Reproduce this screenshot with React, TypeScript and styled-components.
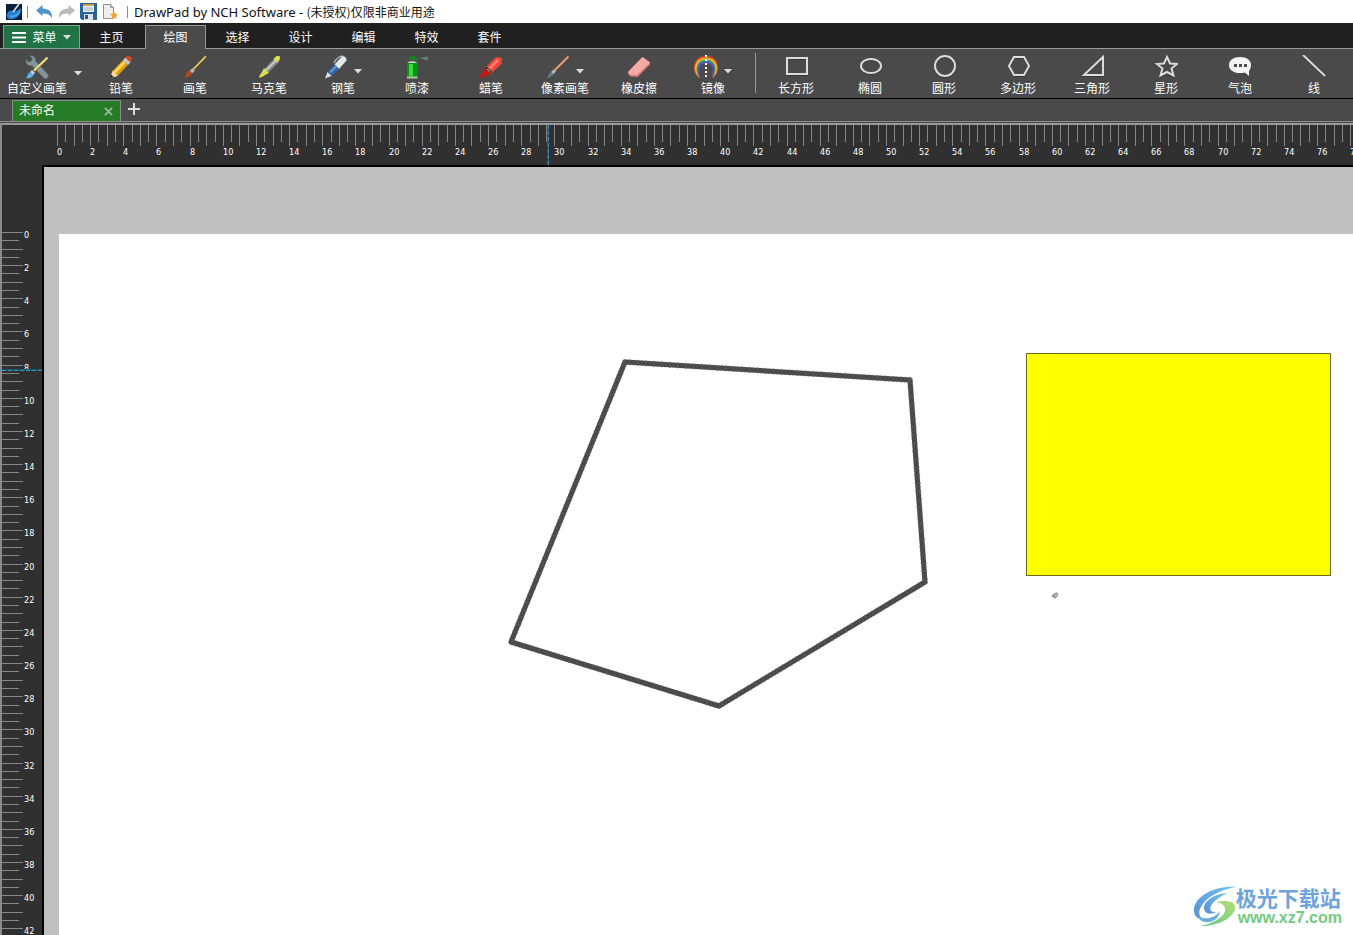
import React, { useEffect, useState } from "react";
import styled, { createGlobalStyle, css } from "styled-components";

const GlobalStyle = createGlobalStyle`
  * { box-sizing: border-box; }
  html, body { margin: 0; }
  body, button {
    font-family: "Noto Sans", "Noto Sans CJK SC", sans-serif;
    font-size: 12px;
    line-height: 16px;
  }
  button {
    margin: 0;
    padding: 0;
    border: 0;
    background: none;
    color: inherit;
  }
  svg { display: block; flex: none; }
`;

const Shell = styled.div`
  display: flex;
  flex-direction: column;
  height: 100vh;
  overflow: hidden;
  background: #4a4a4a;
  color: #fff;
`;

const TitleBar = styled.header`
  display: flex;
  align-items: center;
  flex: none;
  height: 23px;
  padding-left: 5px;
  background: #fff;
  color: #111;
`;

const QuickButton = styled.button`
  display: grid;
  place-items: center;
  width: 22px;
  height: 22px;
`;

const Rule = styled.span<{ $gap: number }>`
  width: 1px;
  height: 12px;
  margin: 0 ${(p) => p.$gap}px;
  background: #8a8a8a;
`;

const Title = styled.h1`
  display: flex;
  align-items: center;
  margin: 0;
  font-size: 13px;
  line-height: 18px;
  font-weight: 400;
  white-space: pre;
`;

const License = styled.span`
  font-family: "Noto Sans CJK SC", sans-serif;
  font-size: 12px;
`;

const MenuRow = styled.nav`
  display: flex;
  align-items: flex-end;
  flex: none;
  height: 26px;
  padding-left: 3px;
  background: #202020;
  box-shadow: inset 0 -1px #999;
`;

const MainMenu = styled.button`
  display: flex;
  align-items: center;
  justify-content: center;
  gap: 6px;
  width: 77px;
  height: 24px;
  padding-top: 1px;
  background: #217346;
  border: 1px solid #7fa790;
`;

const MenuTab = styled.button<{ $active?: boolean }>`
  width: 63px;
  height: 24px;
  padding-top: 1px;
  ${(p) =>
    p.$active &&
    css`
      width: 61px;
      margin-left: 2px;
      padding-top: 0;
      background: #4a4a4a;
      border: 1px solid #999;
      border-bottom: 0;
    `}
`;

const Ribbon = styled.div`
  display: flex;
  align-items: flex-start;
  flex: none;
  height: 50px;
  overflow: hidden;
  border-bottom: 1px solid #000;
`;

const Tool = styled.button`
  display: flex;
  flex-direction: column;
  align-items: center;
  gap: 2px;
  flex: none;
  width: 74px;
  padding-top: 6px;
  white-space: nowrap;
`;

const ToolArt = styled.span`
  display: flex;
  align-items: center;
  height: 24px;
`;

const DropMark = styled.span`
  padding: 8px 0 0 6px;
`;

const CustomTool = styled.div`
  display: flex;
  flex: none;
  width: 84px;
`;

const CustomMore = styled.button`
  width: 8px;
`;

const RibbonDivider = styled.span`
  flex: none;
  width: 1px;
  height: 40px;
  margin: 4px 3px 0 5px;
  background: #999;
`;

const DocBar = styled.div`
  display: flex;
  align-items: flex-end;
  flex: none;
  height: 23px;
  padding-left: 12px;
  border-bottom: 1px solid #8c8c8c;
`;

const DocTab = styled.div`
  display: flex;
  align-items: center;
  justify-content: space-between;
  width: 109px;
  height: 21px;
  padding: 0 6px;
  background: #267c26;
  border: 1px solid #8c8c8c;
  border-bottom: 0;
`;

const IconButton = styled.button`
  display: grid;
  place-items: center;
  width: 12px;
  height: 20px;
`;

const AddTab = styled(IconButton)`
  width: 26px;
  height: 24px;
`;

const Workspace = styled.main`
  display: grid;
  flex: 1;
  min-height: 0;
  margin-top: 1px;
  grid-template: 40px minmax(0, 1fr) / 40px minmax(0, 1fr);
  border-top: 2px solid #999;
  border-left: 2px solid #8a8a8a;
  background: #303030;
`;

const TopRuler = styled.div`
  grid-column: 1 / -1;
  overflow: hidden;
`;

const SideRuler = styled.div`
  overflow: hidden;
`;

const RulerArt = styled.svg`
  width: 100%;
  height: 100%;
  font: 9px "DejaVu Sans Condensed", "DejaVu Sans", sans-serif;
  fill: #fff;
`;

const Stage = styled.section`
  display: flex;
  overflow: hidden;
  padding: 67px 0 0 15px;
  border-top: 2px solid #000;
  border-left: 2px solid #000;
  background: #c0c0c0;
`;

const Page = styled.div`
  position: relative;
  flex: 1;
  background: #fff;
`;

const PageArt = styled.svg`
  width: 100%;
  height: 100%;
`;

const SiteMark = styled.div`
  position: absolute;
  right: 11px;
  bottom: 8px;
  display: flex;
  align-items: center;
`;

const SiteText = styled.div`
  display: flex;
  flex-direction: column;
`;

const SiteName = styled.span`
  color: #6fa3dc;
  font: 700 21px/24px "Noto Sans CJK SC", sans-serif;
`;

const SiteUrl = styled.span`
  padding-left: 2px;
  color: #72cb83;
  font: 700 16px/18px "Liberation Sans", sans-serif;
`;

const Caret = () => (
  <svg width="8" height="5" viewBox="0 0 8 5">
    <path d="M0 0h8L4 4.5z" fill="#ddd" />
  </svg>
);

const Art = ({ children }: { children: React.ReactNode }) => (
  <svg width="24" height="24" viewBox="0 0 24 24" fill="none">
    {children}
  </svg>
);

const Outline = ({ children }: { children: React.ReactNode }) => (
  <Art>
    <g stroke="#2b2b2b" strokeWidth="2" transform="translate(0 1)" opacity=".6">{children}</g>
    <g stroke="#dcdcdc" strokeWidth="2">{children}</g>
  </Art>
);

const art: Record<string, React.ReactNode> = {
  custom: (
    <Art>
      <path d="M1 4.500 3.500 7l3-.7.8-3L5 1c3-.8 6 1.500 5.300 5L22.500 19a2.600 2.600 0 0 1-3.800 3.700L7 10.500C3.500 11.500.3 8.500 1 4.500Z" fill="#83959c" stroke="#66777e" strokeWidth=".6" />
      <path d="m9 16 13.500-13" stroke="#7a6a20" strokeWidth="2.600" />
      <path d="M9 15.500 22.500 2.500" stroke="#f2e48a" strokeWidth="1.800" />
      <path d="m7 15 3 3-2 2-3-3z" fill="#c9d4da" />
      <path d="M1 23c1.500-1.500 1.500-5 4.500-6l3 3c-1 2.800-4.500 3.600-7.500 3Z" fill="#5cb0ee" />
    </Art>
  ),
  pencil: (
    <Art>
      <path d="M3.500 16 14 5l5 5L8.500 21 1 23z" fill="#dd9c18" />
      <path d="M4.500 16.500 15 5.800l2 2L6.500 18.500z" fill="#ffd95c" />
      <path d="M3.500 16 1 23l7.500-2-2-3z" fill="#f4d7a4" />
      <path d="m2 19.500 2.500 2.500L1 23z" fill="#151515" />
      <path d="m14 5 2.500-2.500 5 5L19 10z" fill="#c3c8ca" />
      <path d="M16.500 2.500C18 .8 20 .6 22 1.800c1.500 1.600 1.200 3.900-.5 5.700z" fill="#cf4a2a" />
    </Art>
  ),
  brush: (
    <Art>
      <path d="M11 14.500 23 2" stroke="#5d4b17" strokeWidth="2.400" />
      <path d="M10.500 14 22.800 1.400" stroke="#ecd36a" strokeWidth="1.600" />
      <path d="m9.500 13 2.500 2.500-3 3L6.500 16z" fill="#bbb3a5" />
      <path d="M1 22c2-1 2-5.500 5.500-6.500l3 3C8.500 21.500 4.500 22.700 1 22Z" fill="#b14622" />
    </Art>
  ),
  marker: (
    <Art>
      <path d="M7 14 18.500 2.500l4 4L11 18z" fill="#858585" />
      <path d="M8.500 14.500 19 4l1.500 1.500L10 16z" fill="#c9c9c9" />
      <path d="m16.500 4 3-3h3.300v3.300L20 7.500z" fill="#dce04f" />
      <path d="m7 13 5 5-3 1.500-4 2.500L2 23l.8-3L5 17z" fill="#d9de55" />
    </Art>
  ),
  pen: (
    <Art>
      <path d="M10 8C12 3 17 .5 19 1.500" stroke="#aeb5ba" strokeWidth="1.400" />
      <path d="m10.500 9.500 7.500-8c2-1 5 1.500 4.500 4L15 14z" fill="#e4e8ec" />
      <path d="M3.500 17 10.500 9.500 15 14l-7.500 7.500z" fill="#2f68a8" />
      <path d="m6 16.500 6-6 1 1-6 6.500z" fill="#76a8d7" />
      <path d="M3.500 17 1 23.500 7.500 21z" fill="#dfe4e8" />
    </Art>
  ),
  spray: (
    <Art>
      <path d="m14 3 9-1.500v4z" fill="#67826f" />
      <path d="M5 1h5v2h3v2H5z" fill="#128224" />
      <path d="M2.500 8C3 5.500 11.500 5.500 12 8z" fill="#bfd7bf" />
      <path d="M2 8h10.500v14H2z" fill="#0a9417" />
      <path d="M4 9h4v12H4z" fill="#38dc3d" />
      <path d="M2 21.500h10.500v2H2z" fill="#a9c9aa" />
    </Art>
  ),
  crayon: (
    <Art>
      <path d="m6 13 11-11 6 1-.5 6L11 19.500z" fill="#ee4639" />
      <path d="m8.500 13.500 9.500-9.500 2 2-9.500 9.500z" fill="#ff7a6b" />
      <path d="m5.500 13 6 6.500L2 23l-1-1z" fill="#c91515" />
      <path d="m7 12.500 5 5" stroke="#222" strokeWidth="2.400" />
      <path d="m8 14 3 2.500" stroke="#ddd" strokeWidth="1" />
    </Art>
  ),
  pixel: (
    <Art>
      <path d="M9.500 15.500 23 2" stroke="#5a3f30" strokeWidth="3" />
      <path d="M9 15 22.500 1.500" stroke="#dda078" strokeWidth="2.200" />
      <path d="m8 14 2.300 2.300-3 3L5 17z" fill="#aeb6b8" />
      <path d="M1 22.500c1.500-.8 1-4 4-5.500l2.500 2.500c-1.600 2.500-4 3.500-6.500 3Z" fill="#647b83" />
    </Art>
  ),
  eraser: (
    <Art>
      <path d="M1 17 15.500 2l7.500 5.500v2L10.500 22 3 21.500z" fill="#dc7c78" />
      <path d="M1 17 15.500 2l7.500 5.500L10 20 2 19.500z" fill="#f6aaa5" />
    </Art>
  ),
  mirror: (
    <Art>
      {["#d93c22", "#f28b20", "#f3df38", "#4ca84c", "#3979c5", "#7046a5"].map((color, i) => (
        <path
          key={color}
          d={`M${5 + i * 0.2} 22C${-3 + i * 1.2} ${15 - i * 0.3} ${0 + i} ${1.5 + i * 1.3} 12 ${1.5 + i * 1.3}S${27 - i * 1.2} ${15 - i * 0.3} ${19 - i * 0.2} 22`}
          stroke={color}
          strokeWidth="1.400"
        />
      ))}
      <path d="M12 0v24" stroke="#fff" strokeWidth="2" strokeDasharray="2 2" />
    </Art>
  ),
  rect: <Outline><path d="M3 3h20v16H3z" /></Outline>,
  ellipse: <Outline><ellipse cx="13" cy="11" rx="10" ry="7" /></Outline>,
  circle: <Outline><circle cx="13" cy="11" r="10" /></Outline>,
  polygon: <Outline><path d="M8 2h10l5 9-5 9H8l-5-9z" /></Outline>,
  triangle: <Outline><path d="M23 2v18H4z" /></Outline>,
  star: <Outline><path d="m13 2 3 6.500 7 .5-5.500 4.500 2 7L13 17l-6.500 3.500 2-7L3 9l7-.5z" /></Outline>,
  bubble: (
    <Art>
      <path d="M12 2c7 0 11 3.500 11 8 0 2.500-1 4.500-2 6v5l-4-3.500C7.500 19.500 1 16 1 10c0-5 4.500-8 11-8Z" fill="#f4f4f4" />
      <path d="M6 9h3v3H6zm5 0h3v3h-3zm5 0h3v3h-3z" fill="#4a4a4a" />
    </Art>
  ),
  line: <Outline><path d="m1 0 22 21" /></Outline>,
};

type ToolSpec = { id: string; label: string; split?: boolean };

const brushes: ToolSpec[] = [
  { id: "pencil", label: "铅笔" },
  { id: "brush", label: "画笔" },
  { id: "marker", label: "马克笔" },
  { id: "pen", label: "钢笔", split: true },
  { id: "spray", label: "喷漆" },
  { id: "crayon", label: "蜡笔" },
  { id: "pixel", label: "像素画笔", split: true },
  { id: "eraser", label: "橡皮擦" },
  { id: "mirror", label: "镜像", split: true },
];

const shapes: ToolSpec[] = [
  { id: "rect", label: "长方形" },
  { id: "ellipse", label: "椭圆" },
  { id: "circle", label: "圆形" },
  { id: "polygon", label: "多边形" },
  { id: "triangle", label: "三角形" },
  { id: "star", label: "星形" },
  { id: "bubble", label: "气泡" },
  { id: "line", label: "线" },
];

const RibbonTool = ({ id, label, split }: ToolSpec) => (
  <Tool>
    <ToolArt>
      {art[id]}
      {split && <DropMark><Caret /></DropMark>}
    </ToolArt>
    {label}
  </Tool>
);

// Screen pixels between two whole ruler units.
const UNIT = 16.58;

const useWindowSize = () => {
  const read = () => ({ width: window.innerWidth, height: window.innerHeight });
  const [size, setSize] = useState(read);
  useEffect(() => {
    const update = () => setSize(read());
    window.addEventListener("resize", update);
    return () => window.removeEventListener("resize", update);
  }, []);
  return size;
};

type RulerProps = { origin: number; length: number; vertical?: boolean; marker: number };

const Ruler = ({ origin, length, vertical, marker }: RulerProps) => {
  const units = Math.ceil((length - origin) / UNIT);
  const markerPath = vertical ? `M0 ${marker}H40` : `M${marker} 0V40`;
  return (
    <RulerArt aria-hidden="true">
      <g stroke="#858585" shapeRendering="crispEdges">
        {Array.from({ length: units * 2 }, (_, i) => {
          const at = Math.round(origin + (i * UNIT) / 2) + 0.5;
          const end = i % 2 ? 17 : 21;
          return vertical ? (
            <line key={i} x1="0" x2={end} y1={at} y2={at} />
          ) : (
            <line key={i} y1="0" y2={end} x1={at} x2={at} />
          );
        })}
      </g>
      {Array.from({ length: Math.ceil(units / 2) }, (_, i) => {
        const at = Math.round(origin + i * 2 * UNIT);
        return (
          <text key={i} x={vertical ? 22 : at} y={vertical ? at + 6 : 30}>
            {i * 2}
          </text>
        );
      })}
      <g shapeRendering="crispEdges">
        <path d={markerPath} stroke="#1d5670" strokeWidth="2" />
        <path d={markerPath} stroke="#3b8fb3" strokeDasharray="4 2" />
      </g>
    </RulerArt>
  );
};

const menuTabs = ["主页", "绘图", "选择", "设计", "编辑", "特效", "套件"];
const pentagon = "M566 128 851 146 866 348 660 472 452 408Z";

export default function App() {
  const { width, height } = useWindowSize();
  return (
    <Shell>
      <GlobalStyle />
      <TitleBar>
        <svg width="17" height="17" viewBox="0 0 17 17">
          <path d="M1 1h16v16H1z" fill="#08203f" />
          <path d="M2 14C1 10 4 7 8 8c3 1 5-1 8-3 0 6-3 10-8 11-3 .5-5 0-6-2Z" fill="#2580d4" />
          <path d="M5 13c4 1 8-1 10-5" stroke="#79c3f5" fill="none" />
          <path d="m8 9 6-8" stroke="#efe8dc" strokeWidth="1.600" />
        </svg>
        <Rule $gap={5} />
        <QuickButton aria-label="Undo">
          <svg width="17" height="16" viewBox="0 0 17 16"><path d="M0 6.500 6.500 1v3.500C13 4.500 16.500 8 16 14c-2-3.500-5-4.800-9.500-4.500V12z" fill="#4f94c8" /></svg>
        </QuickButton>
        <QuickButton aria-label="Redo">
          <svg width="17" height="16" viewBox="0 0 17 16"><path d="M17 6.500 10.500 1v3.500C4 4.500.5 8 1 14c2-3.500 5-4.800 9.500-4.500V12z" fill="#b9b9b9" /></svg>
        </QuickButton>
        <QuickButton aria-label="Save">
          <svg width="17" height="17" viewBox="0 0 17 17">
            <path d="M0 0h17v17H2l-2-2z" fill="#286499" />
            <path d="M3 1h11v8H3z" fill="#f1f4f6" />
            <path d="M3 1h11v2H3z" fill="#d59a51" />
            <path d="M4 5h9M4 7h9" stroke="#9ba9b4" />
            <path d="M4 11h9v6H4z" fill="#dce4eb" /><path d="M5 12h3v4H5z" fill="#285680" />
          </svg>
        </QuickButton>
        <QuickButton aria-label="New drawing">
          <svg width="16" height="17" viewBox="0 0 16 17">
            <path d="M1.500 1.500h7l3 3v11h-10z" fill="#eee" stroke="#929292" />
            <path d="M8.500 1.500v3h3" fill="#ccc" stroke="#929292" />
            <path d="m12 8 1 2.500 3 .5-2 2 .8 3-2.800-1.500L9.300 16l.7-3-2-2 3-.5z" fill="#eaa92c" />
          </svg>
        </QuickButton>
        <Rule $gap={6} />
        <Title>DrawPad by NCH Software - <License>(未授权)仅限非商业用途</License></Title>
      </TitleBar>

      <MenuRow>
        <MainMenu>
          <svg width="14" height="11" viewBox="0 0 14 11"><path d="M0 1h14M0 5.500h14M0 10h14" stroke="#fff" strokeWidth="2" /></svg>
          菜单
          <Caret />
        </MainMenu>
        {menuTabs.map((name) => (
          <MenuTab key={name} $active={name === "绘图"}>{name}</MenuTab>
        ))}
      </MenuRow>

      <Ribbon>
        <CustomTool>
          <Tool>
            <ToolArt>{art.custom}</ToolArt>
            自定义画笔
          </Tool>
          <CustomMore aria-label="More brushes"><Caret /></CustomMore>
        </CustomTool>
        {brushes.map((tool) => <RibbonTool key={tool.id} {...tool} />)}
        <RibbonDivider />
        {shapes.map((tool) => <RibbonTool key={tool.id} {...tool} />)}
      </Ribbon>

      <DocBar>
        <DocTab>
          未命名
          <IconButton aria-label="Close">
            <svg width="9" height="9" viewBox="0 0 10 10"><path d="m1 1 8 8M9 1 1 9" stroke="#9fb79f" strokeWidth="2" /></svg>
          </IconButton>
        </DocTab>
        <AddTab aria-label="New tab">
          <svg width="12" height="12" viewBox="0 0 12 12"><path d="M6 0v12M0 6h12" stroke="#ddd" strokeWidth="2" /></svg>
        </AddTab>
      </DocBar>

      <Workspace>
        <TopRuler><Ruler origin={55} length={width - 2} marker={546} /></TopRuler>
        <SideRuler><Ruler vertical origin={67} length={height - 165} marker={205} /></SideRuler>
        <Stage>
          <Page>
            <PageArt role="img" aria-label="Drawing">
              <path d={pentagon} fill="none" stroke="#484848" strokeWidth="5" strokeLinejoin="round" />
              <path d={pentagon} fill="none" stroke="#5c5c5c" strokeWidth="6" strokeDasharray="1 3 2 2" opacity=".6" strokeLinejoin="round" />
              <rect x="967.500" y="119.500" width="304" height="222" fill="#ff0" stroke="#6b6b1c" />
              <path d="M993 363c1-3 3-4 5-4s0 5-2 5-2-3 0-4m-3 2 4 1" fill="#bbb" stroke="#888" />
            </PageArt>
            <SiteMark>
              <svg width="43" height="42" viewBox="0 0 43 42">
                <defs>
                  <linearGradient id="swirlBlue" x1="0" y1="1" x2="1" y2="0"><stop stopColor="#5791d8" /><stop offset="1" stopColor="#72c2ec" /></linearGradient>
                  <linearGradient id="swirlGreen" x1="0" y1="1" x2="1" y2="0"><stop stopColor="#62c58f" /><stop offset="1" stopColor="#b2df72" /></linearGradient>
                </defs>
                <path d="M43 2C25 0 4 9 1 23c-1 7 3 11 9 12-4-4-5-8-2-13C13 12 27 5 43 2Z" fill="url(#swirlBlue)" />
                <path d="M34 8C20 9 10 17 11 24c1 5 7 6 12 3-5 0-7-2-5-6 2-5 9-9 16-13Z" fill="url(#swirlBlue)" />
                <path d="M23 17c10-2 20-1 19 6C41 33 25 41 8 41c12-3 22-8 24-15 1-5-3-8-9-9Z" fill="url(#swirlGreen)" />
                <path d="M5 31c7 4 16 3 22-5-1 8-8 12-15 11-3 0-6-3-7-6Z" fill="#6bacde" />
              </svg>
              <SiteText>
                <SiteName>极光下载站</SiteName>
                <SiteUrl>www.xz7.com</SiteUrl>
              </SiteText>
            </SiteMark>
          </Page>
        </Stage>
      </Workspace>
    </Shell>
  );
}
